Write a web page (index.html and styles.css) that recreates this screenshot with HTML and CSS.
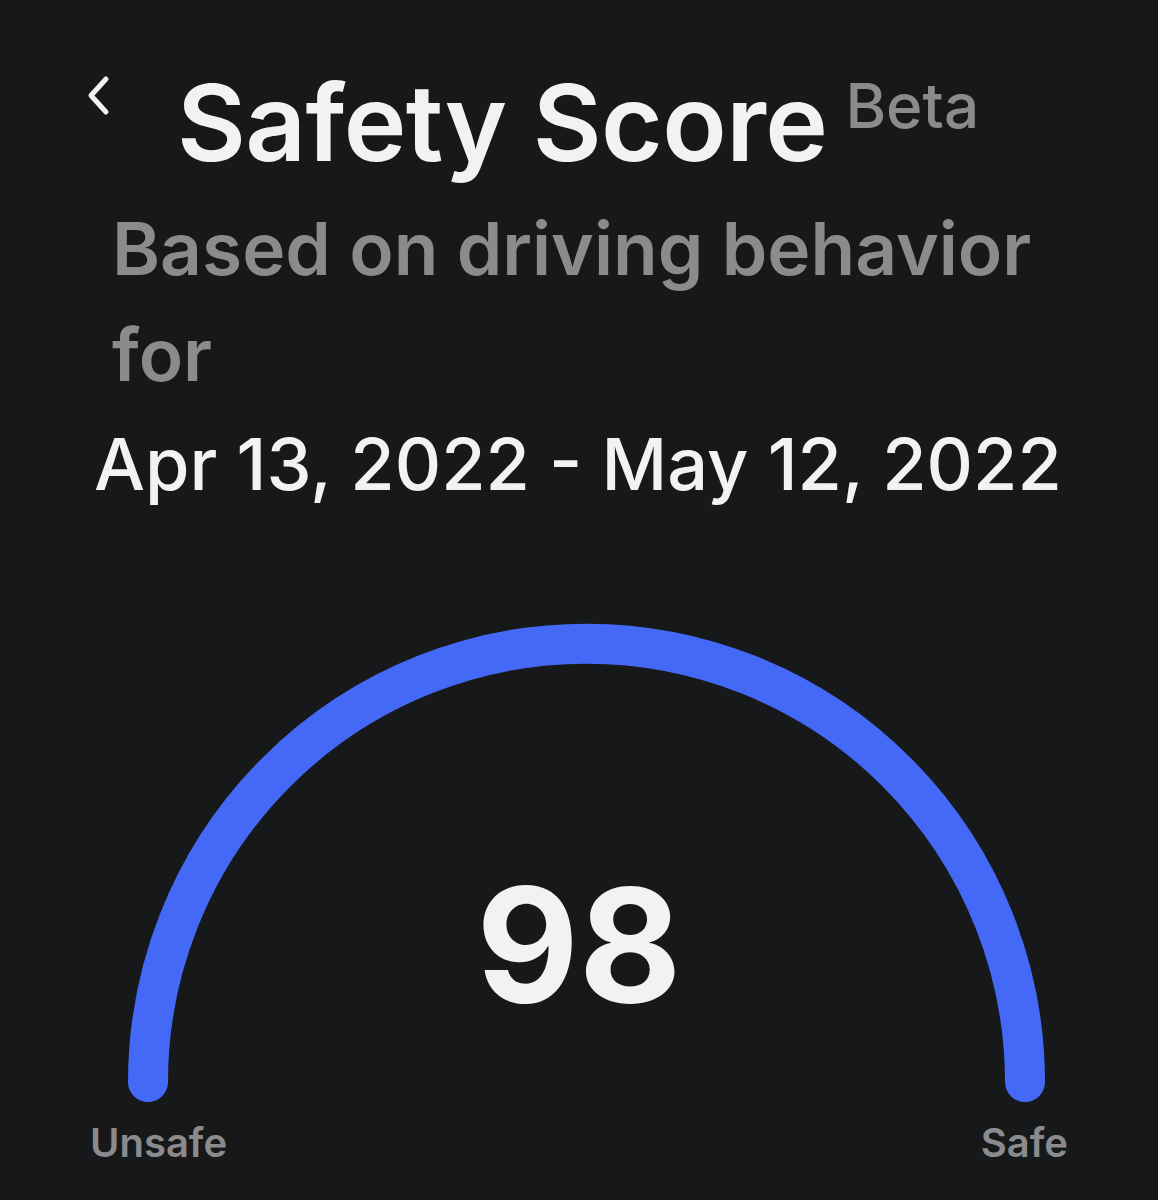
FILE: index.html
```html
<!DOCTYPE html>
<html>
<head>
  <title>Safety Score</title>
  <link rel="stylesheet" href="styles.css">
</head>
<body>
  <div class="screen">
    <div class="header">
      <a class="back" href="#">
        <svg width="30" height="44" viewBox="0 0 30 44">
          <path d="M22 5 L7 21.5 L22 38" fill="none" stroke="#f2f2f2" stroke-width="5" stroke-linecap="round" stroke-linejoin="round"/>
        </svg>
      </a>
      <h1 class="title">Safety Score</h1>
      <span class="beta">Beta</span>
    </div>

    <p class="subtitle">Based on driving behavior for</p>
    <p class="period">Apr 13, 2022 - May 12, 2022</p>

    <div class="gauge">
      <svg class="arc" width="1158" height="480" viewBox="0 0 1158 480">
        <path d="M148 460 A438.5 438.5 0 0 1 1025 460" fill="none" stroke="#4369f6" stroke-width="40" stroke-linecap="round"/>
      </svg>
      <div class="score">98</div>
      <div class="labels">
        <span>Unsafe</span>
        <span>Safe</span>
      </div>
    </div>
  </div>
</body>
</html>
```

FILE: styles.css
```css
body {
  margin: 0;
  background-color: #17181a;
  font-family: Inter, "Noto Sans", sans-serif;
  color: #f2f2f2;
}

.screen {
  width: 1158px;
  height: 1200px;
  overflow: hidden;
}

.header {
  display: flex;
  align-items: flex-start;
  padding: 70px 0 0 84px;
  height: 106px;
}

.back {
  display: block;
  width: 30px;
  height: 44px;
  margin-top: 4px;
}

.title {
  margin: 0 0 0 63px;
  font-size: 106px;
  font-weight: 600;
  line-height: 1;
  letter-spacing: -0.6px;
}

.beta {
  margin: 5px 0 0 18px;
  font-size: 62px;
  font-weight: 500;
  line-height: 1;
  color: #8b8b8d;
}

.subtitle {
  margin: 20px 0 0 112px;
  width: 940px;
  font-size: 73px;
  font-weight: 600;
  line-height: 106px;
  color: #8b8b8d;
}

.period {
  margin: 6px 0 0 94px;
  font-size: 72px;
  font-weight: 500;
  line-height: 100px;
  white-space: nowrap;
}

.gauge {
  position: relative;
  margin-top: 108px;
}

.arc {
  display: block;
}

.score {
  position: absolute;
  left: 0;
  right: 0;
  top: 244px;
  text-align: center;
  font-size: 158px;
  font-weight: 700;
  line-height: 1;
}

.labels {
  display: flex;
  justify-content: space-between;
  margin-top: 17px;
  padding: 0 90px;
  font-size: 40px;
  font-weight: 600;
  line-height: 48px;
  color: #8b8b8d;
}
```
